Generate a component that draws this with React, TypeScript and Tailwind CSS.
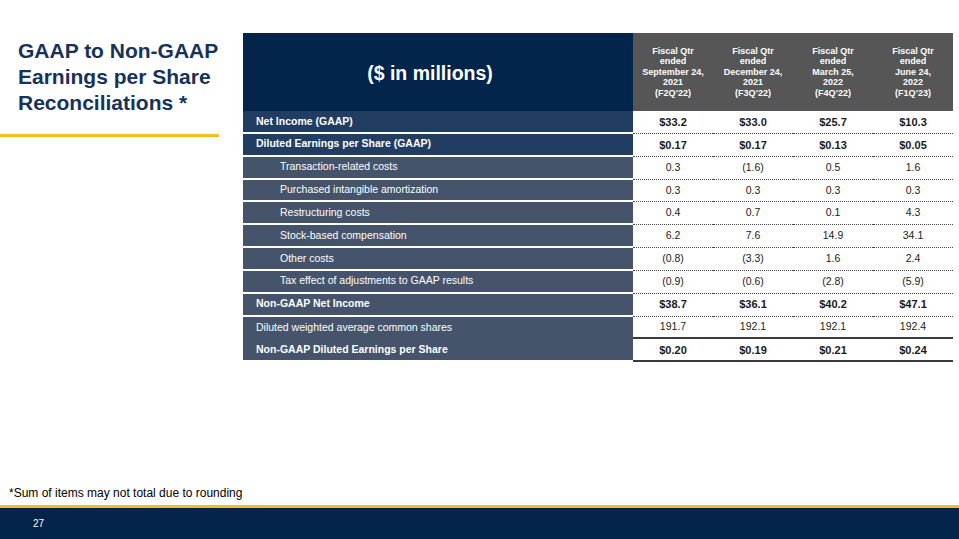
const columns = [
  { date: 'September 24,', year: '2021', qtr: '(F2Q\u201922)' },
  { date: 'December 24,', year: '2021', qtr: '(F3Q\u201922)' },
  { date: 'March 25,', year: '2022', qtr: '(F4Q\u201922)' },
  { date: 'June 24,', year: '2022', qtr: '(F1Q\u201923)' },
];

type Row = {
  label: string;
  values: string[];
  bold?: boolean;
  indent?: boolean;
  dark?: boolean;
  solid?: boolean;
  noGap?: boolean;
};

const rows: Row[] = [
  { label: 'Net Income (GAAP)', values: ['$33.2', '$33.0', '$25.7', '$10.3'], bold: true, dark: true },
  { label: 'Diluted Earnings per Share (GAAP)', values: ['$0.17', '$0.17', '$0.13', '$0.05'], bold: true, dark: true },
  { label: 'Transaction-related costs', values: ['0.3', '(1.6)', '0.5', '1.6'], indent: true },
  { label: 'Purchased intangible amortization', values: ['0.3', '0.3', '0.3', '0.3'], indent: true },
  { label: 'Restructuring costs', values: ['0.4', '0.7', '0.1', '4.3'], indent: true },
  { label: 'Stock-based compensation', values: ['6.2', '7.6', '14.9', '34.1'], indent: true },
  { label: 'Other costs', values: ['(0.8)', '(3.3)', '1.6', '2.4'], indent: true },
  { label: 'Tax effect of adjustments to GAAP results', values: ['(0.9)', '(0.6)', '(2.8)', '(5.9)'], indent: true },
  { label: 'Non-GAAP Net Income', values: ['$38.7', '$36.1', '$40.2', '$47.1'], bold: true },
  { label: 'Diluted weighted average common shares', values: ['191.7', '192.1', '192.1', '192.4'], solid: true, noGap: true },
  { label: 'Non-GAAP Diluted Earnings per Share', values: ['$0.20', '$0.19', '$0.21', '$0.24'], bold: true, solid: true },
];

const App = () => {
  return (
    <div className="w-[959px] h-[539px] flex flex-col bg-white font-['Liberation_Sans',Arial,sans-serif] overflow-hidden">
      <div className="h-[481px] flex">
        {/* Title */}
        <div className="w-[243px] pt-[38px]">
          <h1 className="pl-[18px] text-[21px] leading-[26px] font-bold text-[#17325a]">
            GAAP to Non-GAAP
            <br />
            Earnings per Share
            <br />
            Reconciliations *
          </h1>
          <div className="mt-[18px] w-[219px] h-[3px] bg-[#f2c01e]" />
        </div>

        {/* Table */}
        <div className="pt-[33px]">
          <div className="grid grid-cols-[390px_80px_80px_80px_80px]">
            <div className="h-[78px] bg-[#03244b] flex items-center justify-center text-white text-[19.5px] font-bold pt-[3px] pr-[16px]">
              ($ in millions)
            </div>
            {columns.map((c, i) => (
              <div
                key={i}
                className="h-[78px] bg-[#565656] flex flex-col items-center justify-center text-white text-[9px] leading-[10.6px] font-bold text-center"
              >
                <span>Fiscal Qtr</span>
                <span>ended</span>
                <span>{c.date}</span>
                <span>{c.year}</span>
                <span>{c.qtr}</span>
              </div>
            ))}

            {rows.map((r, ri) => (
              <div key={ri} className="contents">
                <div
                  className={`h-[22.85px] flex items-center text-white text-[10.5px] ${r.noGap ? '' : 'border-b-2 border-white'} ${
                    r.dark ? 'bg-[#213e62]' : 'bg-[#45546b]'
                  } ${r.indent ? 'pl-[37px]' : 'pl-[13px]'} ${r.bold ? 'font-bold' : ''}`}
                >
                  {r.label}
                </div>
                {r.values.map((v, vi) => (
                  <div
                    key={vi}
                    className={`h-[22.85px] flex items-center justify-center text-[#1a1a1a] ${
                      r.solid ? 'border-b-2 border-solid border-[#3a3a3a]' : 'border-b border-dotted border-[#444444]'
                    } ${r.bold ? 'font-bold text-[11px]' : 'text-[10.5px]'}`}
                  >
                    {v}
                  </div>
                ))}
              </div>
            ))}
          </div>
        </div>
      </div>

      {/* Footnote */}
      <div className="h-[24px] flex items-center pl-[9px] text-[12px] text-black">
        *Sum of items may not total due to rounding
      </div>

      {/* Footer */}
      <div className="h-[3px] bg-[#f2c01e]" />
      <div className="flex-1 bg-[#02244a] flex items-center pl-[33px] text-white text-[10px]">27</div>
    </div>
  );
};

export default App;
